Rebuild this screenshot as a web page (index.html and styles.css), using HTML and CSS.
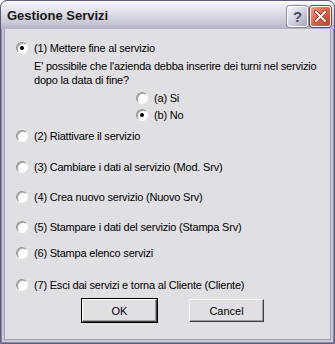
FILE: index.html
```html
<!DOCTYPE html>
<html lang="it">

<head>
    <meta charset="UTF-8">
    <meta name="viewport" content="width=device-width, initial-scale=1.0">
    <title>Gestione Servizi</title>
    <link rel="stylesheet" href="styles.css">
</head>

<body>
    <div class="window">
        <div class="titlebar">
            <span class="title">Gestione Servizi</span>
            <div class="caption-buttons">
                <span class="cap-btn help-btn">?</span>
                <span class="cap-btn close-btn">
                    <svg width="13" height="13" viewBox="0 0 13 13">
                        <path d="M2 2 L11 11 M11 2 L2 11" stroke="#8a2a1a" stroke-width="3.4" stroke-linecap="square" />
                        <path d="M2 2 L11 11 M11 2 L2 11" stroke="#ffffff" stroke-width="2" stroke-linecap="square" />
                    </svg>
                </span>
            </div>
        </div>

        <div class="dialog-body">
            <label class="option opt-1"><span class="radio checked"></span>(1) Mettere fine al servizio</label>
            <p class="question">E' possibile che l'azienda debba inserire dei turni nel servizio<br>dopo la data di fine?</p>
            <div class="sub-options">
                <label class="option sub"><span class="radio"></span>(a) Si</label>
                <label class="option sub sub-b"><span class="radio checked"></span>(b) No</label>
            </div>
            <label class="option opt-2"><span class="radio"></span>(2) Riattivare il servizio</label>
            <label class="option opt-3"><span class="radio"></span>(3) Cambiare i dati al servizio (Mod. Srv)</label>
            <label class="option opt-4"><span class="radio"></span>(4) Crea nuovo servizio (Nuovo Srv)</label>
            <label class="option opt-5"><span class="radio"></span>(5) Stampare i dati del servizio (Stampa Srv)</label>
            <label class="option opt-6"><span class="radio"></span>(6) Stampa elenco servizi</label>
            <label class="option opt-7"><span class="radio"></span>(7) Esci dai servizi e torna al Cliente (Cliente)</label>

            <div class="button-row">
                <button class="btn default-btn">OK</button>
                <button class="btn">Cancel</button>
            </div>
        </div>
    </div>
</body>

</html>
```

FILE: styles.css
```css
/* General Styles */
body {
    margin: 0;
    background-color: #ffffff;
    font-family: "Liberation Sans", Arial, sans-serif;
}

.window {
    width: 335px;
    height: 344px;
    box-sizing: border-box;
    border-radius: 7px 7px 0 0;
    background-color: #c8c8d6;
    border: 1px solid #5e5e7c;
    box-shadow: inset 1px 0 0 #8a8aa6, inset -1px 0 0 #8a8aa6, inset 0 -1px 0 #8a8aa6;
    display: flex;
    flex-direction: column;
    overflow: hidden;
}

/* Title bar */
.titlebar {
    height: 28px;
    flex-shrink: 0;
    display: flex;
    align-items: center;
    justify-content: space-between;
    padding: 0 3px 0 6px;
    background: linear-gradient(#fdfdfe 0%, #ececf2 18%, #dcdce6 45%, #cacad8 75%, #b2b2c6 100%);
    border-radius: 6px 6px 0 0;
}

.title {
    font-weight: bold;
    font-size: 13px;
    color: #1a1a1a;
    padding-top: 1px;
}

.caption-buttons {
    display: flex;
    gap: 2px;
    padding-top: 2px;
}

.cap-btn {
    width: 19px;
    height: 19px;
    border: 1px solid #ffffff;
    border-radius: 3px;
    display: flex;
    align-items: center;
    justify-content: center;
}

.help-btn {
    background: linear-gradient(135deg, #f4f4f8 0%, #d2d2e0 50%, #a6a6be 100%);
    box-shadow: 0 0 0 1px #8c8ca8;
    color: #4a4a6a;
    font-size: 15px;
    font-weight: bold;
    line-height: 19px;
}

.close-btn {
    background: linear-gradient(135deg, #f0a08a 0%, #dc6a50 45%, #c0402c 100%);
    box-shadow: 0 0 0 1px #8c3a2a;
}

/* Dialog body */
.dialog-body {
    flex: 1;
    margin: 0 3px 3px 3px;
    background-color: #e0dfe3;
    border-left: 1px solid #a0a0b4;
    border-right: 1px solid #a0a0b4;
    border-bottom: 1px solid #a0a0b4;
    padding: 11px 0 0 11px;
    font-size: 11px;
    letter-spacing: -0.2px;
    color: #000000;
}

.option {
    display: flex;
    align-items: center;
    gap: 6px;
    height: 16px;
}

.opt-2 { margin-top: 5px; }
.opt-3 { margin-top: 15px; }
.opt-4 { margin-top: 14px; }
.opt-5 { margin-top: 14px; }
.opt-6 { margin-top: 10px; }
.opt-7 { margin-top: 16px; }

.question {
    margin: 3px 0 0 18px;
    line-height: 14px;
}

.sub-options {
    margin: 3px 0 0 120px;
}

.sub-b {
    margin-top: 1px;
}

/* Classic radio button */
.radio {
    width: 10px;
    height: 10px;
    flex-shrink: 0;
    border-radius: 50%;
    border: 1px solid;
    border-color: #8c8c8c #f4f4f4 #f4f4f4 #8c8c8c;
    background-color: #ffffff;
    box-shadow: inset 1px 1px 0 #a8a8a8, 0 0 1px #ffffff;
    position: relative;
}

.radio.checked::after {
    content: "";
    position: absolute;
    left: 3px;
    top: 3px;
    width: 4px;
    height: 4px;
    border-radius: 50%;
    background-color: #000000;
}

/* Buttons */
.button-row {
    display: flex;
    gap: 32px;
    margin: 6px 0 0 66px;
}

.btn {
    width: 75px;
    height: 23px;
    padding: 0;
    background-color: #e0dfe3;
    border: 1px solid;
    border-color: #ffffff #404040 #404040 #ffffff;
    box-shadow: inset -1px -1px 0 #9c9ca4;
    font-family: "Liberation Sans", Arial, sans-serif;
    font-size: 11px;
    color: #000000;
}

.default-btn {
    outline: 1px solid #000000;
    outline-offset: 0;
    border-color: #ffffff #404040 #404040 #ffffff;
}
```
